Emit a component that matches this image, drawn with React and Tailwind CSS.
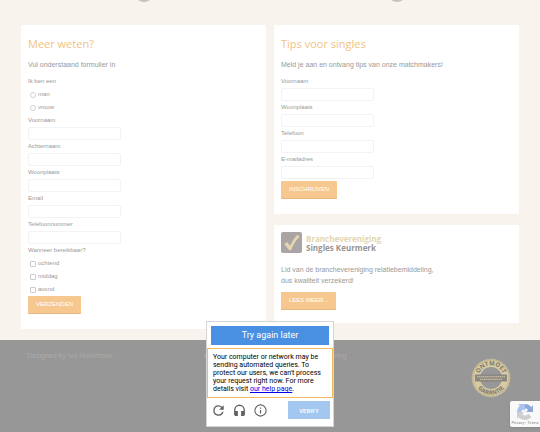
import React, { useState } from "react";

const contactVelden = [
  { id: "c-voornaam", label: "Voornaam" },
  { id: "c-achternaam", label: "Achternaam" },
  { id: "c-woonplaats", label: "Woonplaats" },
  { id: "c-email", label: "Email" },
  { id: "c-telefoon", label: "Telefoonnummer" },
];

const tipsVelden = [
  { id: "t-voornaam", label: "Voornaam" },
  { id: "t-woonplaats", label: "Woonplaats" },
  { id: "t-telefoon", label: "Telefoon" },
  { id: "t-email", label: "E-mailadres" },
];

function Titel({ children }) {
  return (
    <h2 className="font-['Open_Sans',sans-serif] text-[11px] leading-4 text-[#f3c283]">
      {children}
    </h2>
  );
}

function Veld({ id, label }) {
  return (
    <div className="flex flex-col">
      <label htmlFor={id} className="leading-[13px]">
        {label}
      </label>
      <input
        id={id}
        type="text"
        className="h-[13px] w-[93px] rounded-xs border border-[#f3f3f3] bg-white px-1 outline-none"
      />
    </div>
  );
}

function Keuze({ type, name, label }) {
  return (
    <label className="flex h-[13px] items-center gap-[2px] pl-[2px]">
      <input
        type={type}
        name={name}
        className={
          type === "radio"
            ? "size-[6px] appearance-none rounded-full border border-[#d2d2d2] bg-white checked:bg-[#f3c283]"
            : "size-[6px] appearance-none rounded-[1px] border border-[#cccccc] bg-white checked:bg-[#f3c283]"
        }
      />
      {label}
    </label>
  );
}

function Knop({ children, type = "submit" }) {
  return (
    <button
      type={type}
      className="h-[18px] self-start rounded-[1px] border-b border-[#e6b77f] bg-[#f6c88f] px-2 text-[6px] text-white"
    >
      {children}
    </button>
  );
}

function Keurmerk() {
  return (
    <div className="flex items-center gap-1">
      <svg viewBox="0 0 22 22" className="size-[21px]">
        <rect width="22" height="22" rx="2" fill="#aaa4a4" />
        <path d="M3.500 12.500 L6.500 10.500 L9.500 14.500 Q12.500 8 17 3 L19.500 5 Q13.500 11 10.500 19 L8.500 19 Z" fill="#e3d6b0" />
      </svg>
      <p className="font-['Open_Sans',sans-serif] text-[8px] leading-[9px] font-bold">
        <span className="block text-[#e3d6b0]">Branchevereniging</span>
        <span className="block text-[#979494]">Singles Keurmerk</span>
      </p>
    </div>
  );
}

function Zegel() {
  return (
    <svg viewBox="0 0 40 40" className="size-10">
      <circle cx="20" cy="20" r="18.800" fill="#cdbf97" stroke="#cdbf97" strokeWidth="1.200" strokeDasharray="1 1" />
      <circle cx="20" cy="20" r="17.800" fill="#d8cba3" stroke="#bcae86" strokeWidth="0.500" />
      <circle cx="20" cy="20" r="11" fill="#979797" />
      <rect x="4" y="16.500" width="32" height="7" fill="#8a8682" />
      <path id="boog-boven" d="M7.300 20 A12.700 12.700 0 0 1 32.700 20" fill="none" />
      <path id="boog-onder" d="M3.300 20 A16.700 16.700 0 0 0 36.700 20" fill="none" />
      <g fill="#7d776c" fontFamily="Open Sans, sans-serif" fontSize="6" fontWeight="700" textAnchor="middle">
        <text>
          <textPath href="#boog-boven" startOffset="50%">ONTMOET</textPath>
        </text>
        <text>
          <textPath href="#boog-onder" startOffset="50%">GARANTIE</textPath>
        </text>
      </g>
      <path d="M6 18.800 H34 M9 21.300 H31" stroke="#d8cba3" strokeWidth="1" strokeDasharray="1.500 0.400" />
    </svg>
  );
}

function CaptchaBadge() {
  return (
    <div className="fixed right-0 bottom-[5px] flex h-[26px] w-[30px] flex-col items-center rounded-l-xs bg-[#f9f9f9] shadow-sm">
      <svg viewBox="0 0 64 64" className="mt-[3px] size-4">
        <path d="M64 31.950 V4.500 L56.500 12 C50.500 4.700 41.800 0 32 0 C21.500 0 12.300 5 6.400 12.700 L18.800 25.200 A16.500 16.500 0 0 1 44.500 23.500 L36 32 Z" fill="#8fa9d6" />
        <path d="M32 0 H4.500 L12 7.500 C4.700 13.500 0 22.200 0 32 C0 42.500 5 51.700 12.700 57.600 L25.200 45.200 A16.500 16.500 0 0 1 23.500 19.500 L32 28 Z" fill="#a9c3ee" />
        <path d="M0 32 V59.500 L7.500 52 C13.500 59.300 22.200 64 32 64 C42.500 64 51.700 59 57.600 51.300 L45.200 38.800 A16.500 16.500 0 0 1 19.500 40.500 L28 32 Z" fill="#cfcfcf" />
      </svg>
      <p className="font-['Roboto',sans-serif] text-[4px] leading-[5px] text-[#8a8a8a]">
        <a href="#privacy">Privacy</a> - <a href="#terms">Terms</a>
      </p>
    </div>
  );
}

function CaptchaMelding() {
  return (
    <div
      role="dialog"
      aria-label="Try again later"
      className="fixed bottom-[5px] left-1/2 w-32 -translate-x-1/2 border border-[#d5d5d5] bg-white font-['Roboto',sans-serif] text-black"
    >
      <div className="m-1 mb-[3px] bg-[#4a90e2] text-center text-[9px] leading-[19px] text-white">
        Try again later
      </div>
      <p className="border border-[#f0bb5c] py-1 pl-[5px] text-[7px] leading-2">
        Your computer or network may be sending automated queries. To protect
        our users, we can't process your request right now. For more details
        visit{" "}
        <a href="#help" className="text-[#0000ee] underline">
          our help page
        </a>
        .
      </p>
      <div className="flex items-center gap-2 pt-[3px] pr-[3px] pb-[7px] pl-[5px] text-[#606060]">
        <button type="button" aria-label="Refresh">
          <svg viewBox="2 2 20 20" className="size-[13px]" fill="currentColor">
            <path d="M17.650 6.350 A7.960 7.960 0 0 0 12 4 A8 8 0 1 0 19.730 14 H17.650 A6 6 0 1 1 12 6 C13.660 6 15.140 6.690 16.220 7.780 L13 11 H20 V4 Z" />
          </svg>
        </button>
        <button type="button" aria-label="Audio">
          <svg viewBox="1 0 22 24" className="size-[13px]" fill="currentColor">
            <path d="M12 1 A10 10 0 0 0 2 11 V19 A3 3 0 0 0 5 22 H9 V13 H4.500 V11 A7.500 7.500 0 0 1 19.500 11 V13 H15 V22 H19 A3 3 0 0 0 22 19 V11 A10 10 0 0 0 12 1 Z" />
          </svg>
        </button>
        <button type="button" aria-label="Info">
          <svg viewBox="1 1 22 22" className="size-[13px]" fill="currentColor">
            <circle cx="12" cy="12" r="9.500" fill="none" stroke="currentColor" strokeWidth="1.800" />
            <path d="M11 7 H13 V9 H11 Z M11 11 H13 V17 H11 Z" />
          </svg>
        </button>
        <button
          type="button"
          disabled
          className="ml-auto h-[18px] w-[42px] bg-[#a4c7f0] text-[6px] font-medium text-white"
        >
          VERIFY
        </button>
      </div>
    </div>
  );
}

export default function App() {
  const [verstuurd, setVerstuurd] = useState(false);

  const verstuur = (e) => {
    e.preventDefault();
    setVerstuurd(true);
  };

  return (
    <div className="flex min-h-screen flex-col overflow-hidden bg-[#f8f3ed] font-['Liberation_Sans',sans-serif] text-[6px] text-[#999]">
      <div className="grid h-[25px] grid-cols-2 gap-2 px-[21px]">
        <span className="-mt-[18px] size-5 justify-self-center rounded-full bg-[#c8c3bd]" />
        <span className="-mt-[18px] size-5 justify-self-center rounded-full bg-[#c8c3bd]" />
      </div>

      <main className="grid grid-cols-2 items-start gap-2 px-[21px] pb-[11px]">
        <form
          onSubmit={verstuur}
          data-verstuurd={verstuurd}
          className="flex flex-col rounded-[1px] bg-white px-[7px] pt-[11px] pb-[15px]"
        >
          <Titel>Meer weten?</Titel>
          <p className="mt-2 mb-[6px] text-[7px] leading-[9px]">
            Vul onderstaand formulier in
          </p>
          <fieldset>
            <legend className="leading-[13px]">Ik ben een</legend>
            <Keuze type="radio" name="geslacht" label="man" />
            <Keuze type="radio" name="geslacht" label="vrouw" />
          </fieldset>
          {contactVelden.map((v) => (
            <Veld key={v.id} id={v.id} label={v.label} />
          ))}
          <fieldset>
            <legend className="leading-[13px]">Wanneer bereikbaar?</legend>
            <Keuze type="checkbox" name="ochtend" label="ochtend" />
            <Keuze type="checkbox" name="middag" label="middag" />
            <Keuze type="checkbox" name="avond" label="avond" />
          </fieldset>
          <Knop>VERZENDEN</Knop>
        </form>

        <div className="flex flex-col gap-[11px]">
          <form
            onSubmit={verstuur}
            className="flex flex-col rounded-[1px] bg-white px-[7px] pt-[11px] pb-[15px]"
          >
            <Titel>Tips voor singles</Titel>
            <p className="mt-2 mb-[6px] text-[7px] leading-[9px]">
              Meld je aan en ontvang tips van onze matchmakers!
            </p>
            <div className="mb-[2px]">
              {tipsVelden.map((v) => (
                <Veld key={v.id} id={v.id} label={v.label} />
              ))}
            </div>
            <Knop>INSCHRIJVEN</Knop>
          </form>

          <section className="flex flex-col rounded-[1px] bg-white px-[7px] pt-[7px] pb-[13px]">
            <Keurmerk />
            <p className="mt-[11px] mb-[6px] text-[7px] leading-[11px]">
              Lid van de branchevereniging relatiebemiddeling,
              <br />
              dus kwaliteit verzekerd!
            </p>
            <Knop type="button">LEES MEER...</Knop>
          </section>
        </div>
      </main>

      <footer className="grid flex-1 grid-cols-3 items-start bg-[#979797] px-[27px] pt-3 text-[7px] leading-2 text-[#ababab]">
        <p>Designed by Ivo Hollerhoek</p>
        <nav className="flex justify-center gap-4 pl-[10px] whitespace-nowrap">
          <a href="#voorwaarden">Algemene voorwaarden</a>
          <a href="#privacyverklaring">Privacyverklaring</a>
        </nav>
        <div className="mt-[6px] mr-[2px] justify-self-end">
          <Zegel />
        </div>
      </footer>

      <CaptchaMelding />
      <CaptchaBadge />
    </div>
  );
}
